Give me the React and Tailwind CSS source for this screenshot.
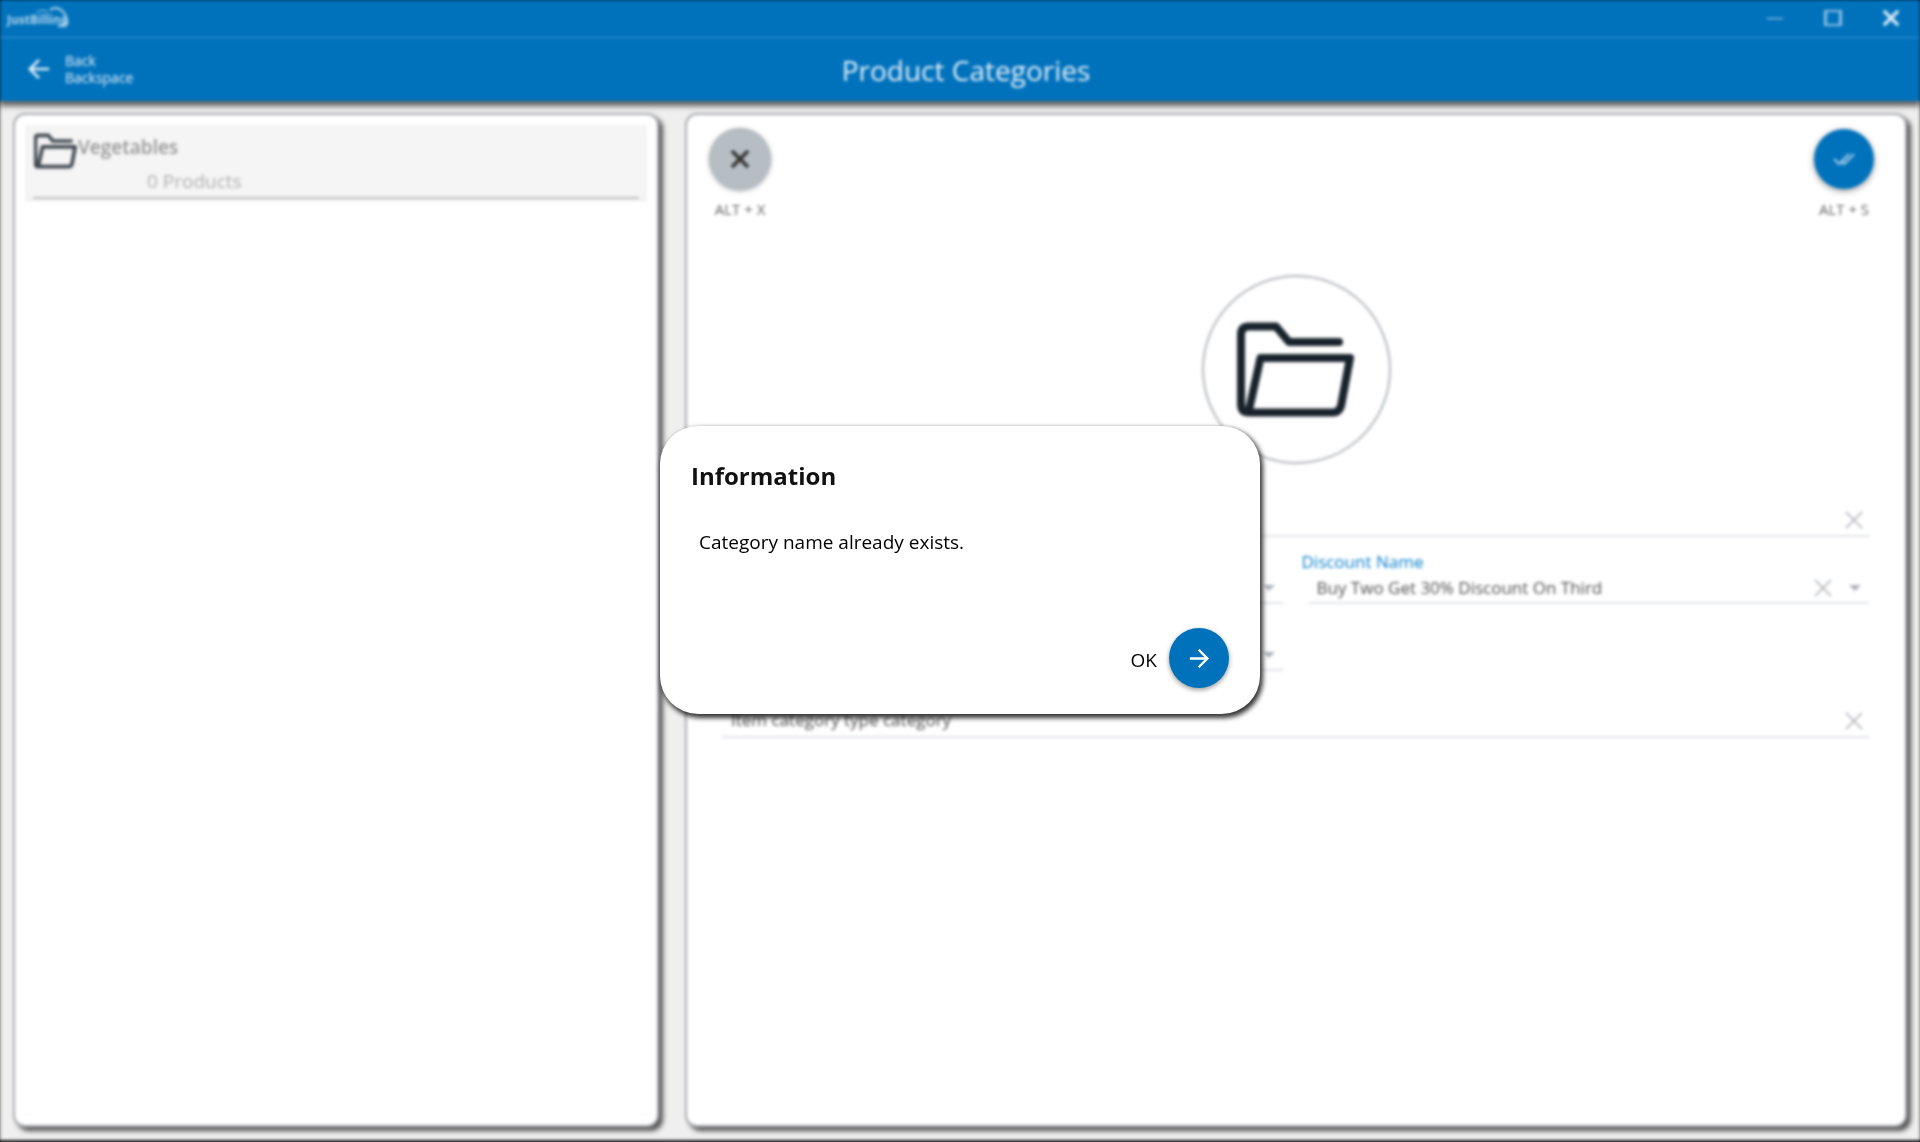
import React from "react";

function FolderIcon({ className, strokeWidth = 8 }) {
  return (
    <svg viewBox="0 0 118 95" className={className} fill="none" stroke="currentColor" strokeWidth={strokeWidth} strokeLinejoin="round" strokeLinecap="round" aria-hidden="true">
      <path d="M102 20H52L39 4.500H12Q4 4.500 4 12.500V82Q4 90.500 12 90.500H96Q102 90.500 104 84L113 36H23.500L12 88" />
    </svg>
  );
}

function Cross({ className, strokeWidth = 2 }) {
  return (
    <svg viewBox="0 0 20 20" className={className} fill="none" stroke="currentColor" strokeWidth={strokeWidth} aria-hidden="true">
      <path d="M1 1L19 19M19 1L1 19" />
    </svg>
  );
}

function Caret() {
  return (
    <svg viewBox="0 0 12 6" className="h-[6px] w-3 shrink-0" fill="#a9b1b8" aria-hidden="true">
      <path d="M0 0H12L6 6Z" />
    </svg>
  );
}

function ArrowIcon({ className, left }) {
  return (
    <svg viewBox="0 0 24 24" className={className} fill="none" stroke="currentColor" strokeWidth="2.800" aria-hidden="true">
      {left ? <path d="M23 12H3M12 2L2 12L12 22" /> : <path d="M1 12H20M11 2L21 12L11 22" />}
    </svg>
  );
}

function ClearButton({ label }) {
  return (
    <button type="button" aria-label={label} className="shrink-0 pt-px text-[#b4bbc1]">
      <Cross className="h-[18px] w-[18px]" strokeWidth={2} />
    </button>
  );
}

function Logo() {
  return (
    <div className="relative ml-[7px] h-8 w-16 text-[#b5d6ee]">
      <span className="absolute bottom-1 left-0 text-[12px] leading-4 font-bold">JustBilling</span>
      <svg viewBox="0 0 64 32" className="absolute inset-0 h-full w-full" fill="none" stroke="currentColor" strokeWidth="2" aria-hidden="true">
        <path d="M43 10Q48 6 54 10Q59 14 59 18Q63 25 55 26H51" />
        <path d="M29 13Q34 8 41 12" strokeWidth="1" />
      </svg>
    </div>
  );
}

function TitleBar() {
  return (
    <div className="flex h-[38px] items-start justify-between border-b border-[#3f92cf]">
      <Logo />
      <div className="flex gap-[41px] pt-[10px] pr-[21px] text-[#e0eef9]">
        <button type="button" aria-label="Minimize" className="flex h-4 w-4 items-center">
          <span className="h-px w-4 bg-[#c5def2]" />
        </button>
        <button type="button" aria-label="Maximize" className="h-4 w-[18px] border-x-[3px] border-y-2 border-[#8fc0e4]" />
        <button type="button" aria-label="Close">
          <Cross className="h-4 w-4" strokeWidth={4} />
        </button>
      </div>
    </div>
  );
}

function Header() {
  return (
    <header className="relative bg-[#0072bc] shadow-[0_5px_5px_rgba(0,0,0,0.6)]">
      <TitleBar />
      <div className="grid h-[63px] grid-cols-[1fr_auto_1fr] items-center">
        <button type="button" className="flex items-center gap-[15px] justify-self-start pb-px pl-7 text-left text-[#e6f1fa]">
          <ArrowIcon left className="h-[22px] w-[22px]" />
          <span className="text-[14px] leading-[17px]">
            Back
            <br />
            Backspace
          </span>
        </button>
        <h1 className="pl-3 text-[28px] leading-10 text-[#e6f1fa]">Product Categories</h1>
      </div>
    </header>
  );
}

function CategoryList() {
  return (
    <aside className="rounded-xl border-2 border-[#a6abae] bg-white p-[10px] shadow-[4px_4px_4px_rgba(0,0,0,0.65)]">
      <div className="h-full border border-[#fafafa]">
        <button type="button" className="block w-full border border-[#ececec] bg-[#f5f5f5] px-[6px] pb-px text-left">
          <span className="flex h-[72px] border-b-2 border-[#bdbdbd]">
            <FolderIcon className="mt-[6px] ml-px h-[36px] w-[43px] shrink-0 text-[#3f474e]" strokeWidth={10} />
            <span className="flex flex-col">
              <span className="pt-[8px] pl-px text-[19px] leading-6 font-semibold text-[#959595]">Vegetables</span>
              <span className="pt-[10px] pl-[70px] text-[19px] leading-6 text-[#b0b0b0]">0 Products</span>
            </span>
          </span>
        </button>
      </div>
    </aside>
  );
}

function Toolbar() {
  return (
    <div className="flex justify-between px-[22px] pt-[13px] text-[15px] leading-5 text-[#606060]">
      <button type="button" className="flex w-[62px] flex-col items-center gap-[9px]">
        <span className="flex h-[62px] w-[62px] items-center justify-center rounded-full bg-[#b6bdc3] text-[#333] shadow-[0_1px_4px_rgba(0,0,0,0.3)]">
          <Cross className="h-[18px] w-[18px]" strokeWidth={4} />
        </span>
        <span className="whitespace-nowrap">ALT + X</span>
      </button>
      <button type="button" className="mr-2 flex w-[62px] flex-col items-center gap-[10px] pt-px">
        <span className="flex h-[60px] w-[60px] items-center justify-center rounded-full bg-[#0072bc] text-[#a5cdea] shadow-[0_2px_6px_rgba(0,0,0,0.4)]">
          <svg viewBox="0 0 22 14" className="h-[14px] w-[22px]" fill="none" stroke="currentColor" strokeWidth="2" aria-hidden="true">
            <path d="M1 7L6 12L16 2M8 9L11 12L21 2" />
          </svg>
        </span>
        <span className="whitespace-nowrap">ALT + S</span>
      </button>
    </div>
  );
}

function SelectField({ label, caption, value, clearable }) {
  return (
    <div className="flex h-[67px] flex-col justify-end">
      {caption && (
        <label htmlFor={label} className="-ml-[7px] text-[17px] leading-6 text-[#0a80cc]">
          {label}
        </label>
      )}
      <div className="flex h-[30px] items-center border-b-2 border-[#dfe3e6] pr-2 pb-px">
        <select id={label} aria-label={label} className="min-w-0 flex-1 appearance-none bg-transparent pl-2 text-[17px] leading-6 text-[#505050] outline-none">
          <option>{value}</option>
        </select>
        <div className="flex items-center gap-[17px]">
          {clearable && <ClearButton label={"Clear " + label} />}
          <Caret />
        </div>
      </div>
    </div>
  );
}

function TextField({ label, value }) {
  return (
    <div className="flex h-[34px] items-center border-b-2 border-[#dfe3e6] pr-[6px]">
      <input aria-label={label} defaultValue={value} className="min-w-0 flex-1 bg-transparent pl-[9px] text-[17px] leading-6 text-[#505050] outline-none" />
      <ClearButton label={"Clear " + label} />
    </div>
  );
}

function CategoryEditor() {
  return (
    <section className="rounded-xl border-2 border-[#a6abae] bg-white shadow-[4px_4px_4px_rgba(0,0,0,0.65)]">
      <Toolbar />
      <div className="mx-auto mt-[56px] flex h-[189px] w-[189px] items-center justify-center rounded-full border-2 border-[#b0b5b9] text-[#18222b]">
        <FolderIcon className="h-[95px] w-[118px]" />
      </div>
      <form className="mt-[39px] pr-9 pl-[35px]" onSubmit={(e) => e.preventDefault()}>
        <TextField label="Category Name" value="" />
        <div className="grid grid-cols-2 gap-x-[26px]">
          <SelectField label="Discount Type" value="" />
          <SelectField label="Discount Name" caption value="Buy Two Get 30% Discount On Third" clearable />
          <SelectField label="Parent Category" value="" />
        </div>
        <div className="mt-[33px]">
          <TextField label="Description" value="Item category type category" />
        </div>
      </form>
    </section>
  );
}

function InformationDialog() {
  return (
    <div className="fixed inset-0 flex items-center justify-center pb-[2px] backdrop-blur-[1px]">
      <div role="dialog" aria-modal="true" aria-labelledby="dialog-title" className="flex h-[288px] w-[600px] flex-col rounded-[38px] bg-white pt-8 pr-[31px] pb-[26px] pl-[31px] shadow-[2px_3px_5px_1px_rgba(0,0,0,0.8)]">
        <h2 id="dialog-title" className="text-[24px] leading-9 font-bold text-[#111]">
          Information
        </h2>
        <p className="mt-[34px] pl-2 text-[19px] leading-7 text-black">Category name already exists.</p>
        <button type="button" className="mt-auto flex items-center gap-3 self-end text-[19px] font-medium text-black">
          <span className="pt-1">OK</span>
          <span className="flex h-[60px] w-[60px] items-center justify-center rounded-full bg-[#0072bc] text-white shadow-[0_2px_5px_rgba(0,0,0,0.4)]">
            <ArrowIcon className="h-[21px] w-[21px]" />
          </span>
        </button>
      </div>
    </div>
  );
}

export default function App() {
  return (
    <div className="h-screen overflow-hidden bg-black font-['Open_Sans','Noto_Sans',sans-serif]">
      <div className="flex h-full flex-col border-b-2 border-[#22242a] bg-[#efefef] blur-[1px]">
        <Header />
        <main className="grid flex-1 grid-cols-[646fr_1222fr] gap-[26px] px-[13px] pt-[12px] pb-[13px]">
          <CategoryList />
          <CategoryEditor />
        </main>
      </div>
      <InformationDialog />
    </div>
  );
}
